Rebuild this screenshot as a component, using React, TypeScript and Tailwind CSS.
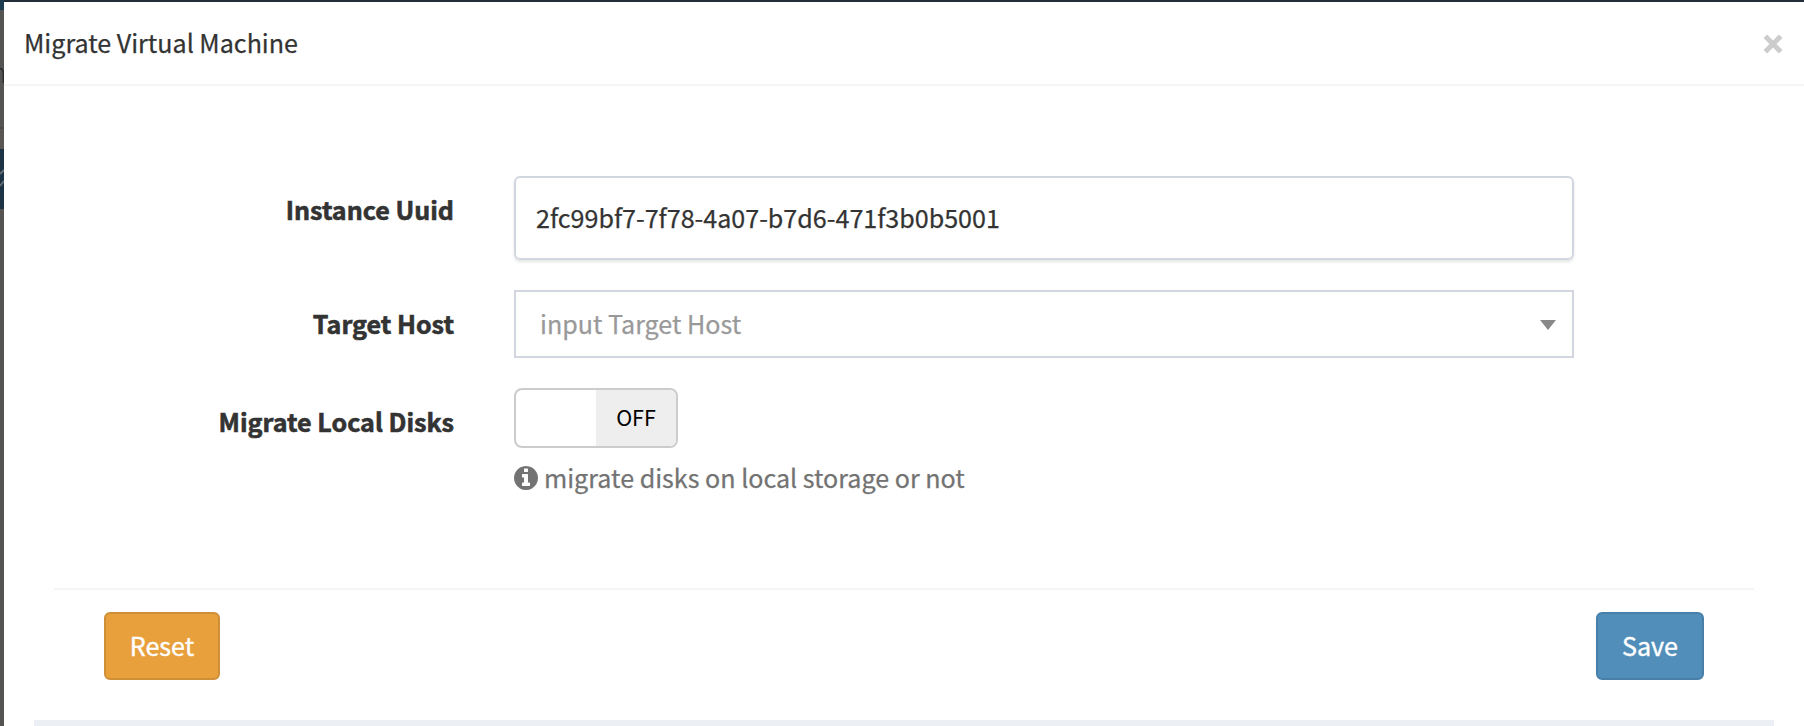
import React from "react";

const sans = "font-['Noto_Sans_CJK_SC','Noto_Sans',sans-serif]";

function InfoIcon() {
  return (
    <svg viewBox="128 128 1536 1536" className="mt-[2px] size-6 shrink-0" fill="currentColor" aria-hidden="true">
      <path d="M1152 1376v-160q0-14-9-23t-23-9h-96v-512q0-14-9-23t-23-9h-320q-14 0-23 9t-9 23v160q0 14 9 23t23 9h96v320h-96q-14 0-23 9t-9 23v160q0 14 9 23t23 9h448q14 0 23-9t9-23zm-128-896v-160q0-14-9-23t-23-9h-192q-14 0-23 9t-9 23v160q0 14 9 23t23 9h192q14 0 23-9t9-23zm640 416q0 209-103 385.5t-279.5 279.5-385.5 103-385.5-103-279.5-279.5-103-385.5 103-385.5 279.5-279.5 385.5-103 385.5 103 279.5 279.5 103 385.5z" />
    </svg>
  );
}

function Label({ children }: { children: React.ReactNode }) {
  return (
    <div className="w-[450px] shrink-0 pt-[13px] text-right font-bold leading-10 [-webkit-text-stroke:0.6px_#333]">
      {children}
    </div>
  );
}

/* Sliver of the dimmed page that stays visible beside the dialog. */
function Backdrop() {
  return (
    <div className="flex w-1 shrink-0 flex-col overflow-hidden bg-[#565453]">
      <div className="h-[10px] bg-[#1d3c52]" />
      <div className="h-[117px] pt-[57px]">
        <svg viewBox="0 0 4 17" className="h-[17px] w-1" fill="none" stroke="#2c2b2b" strokeWidth="1.6" aria-hidden="true">
          <path d="M0 1.5Q3.4 2 3.4 6V16" />
        </svg>
      </div>
      <div className="h-[2px] bg-[#4d4b4c]" />
      <div className="h-5 bg-[#595653]" />
      <div className="h-[60px] bg-[#1b3344] pt-[20px]">
        <svg viewBox="0 0 4 18" className="h-[18px] w-1" fill="none" stroke="#626d75" strokeWidth="2" aria-hidden="true">
          <path d="M0 5L4 1M0 17L4 12" />
        </svg>
      </div>
    </div>
  );
}

export default function App() {
  return (
    <div
      className={`${sans} flex h-[726px] w-[1804px] overflow-hidden bg-white text-[25.08px] leading-10 text-[#333] [-webkit-text-stroke:0.25px]`}
    >
      <Backdrop />
      <div className="flex min-w-0 flex-1 flex-col border-t-2 border-[#222d3a]">
        <header className="flex h-[84px] items-center justify-between border-b-2 border-[#f4f4f4] pl-5 pr-[21px]">
          <h4 className="pb-[2px]">Migrate Virtual Machine</h4>
          <button aria-label="Close" className="mt-px text-[#ccc]">
            <svg viewBox="0 0 20 20" className="size-5" fill="none" stroke="currentColor" strokeWidth="5" aria-hidden="true">
              <path d="M2.3 2.3L17.7 17.7M17.7 2.3L2.3 17.7" />
            </svg>
          </button>
        </header>

        <main className="mt-[90px] flex flex-col">
          <div className="flex h-[84px] gap-[60px]">
            <Label>Instance Uuid</Label>
            <div className="flex w-[1060px] items-center rounded-md border-2 border-[#d2d6de] px-5 pb-[2px] shadow-[0_2px_3px_rgba(0,0,0,0.1)]">
              2fc99bf7-7f78-4a07-b7d6-471f3b0b5001
            </div>
          </div>
          <div className="mt-[30px] flex h-[68px] gap-[60px]">
            <Label>Target Host</Label>
            <div className="flex w-[1060px] items-center justify-between border-2 border-[#d2d6de] pl-6 pr-4 text-[#999]">
              <span className="pb-[2px]">input Target Host</span>
              <svg viewBox="0 0 16 10" className="mt-[2px] h-[10px] w-4" fill="#888" aria-hidden="true">
                <path d="M0 0H16L8 10Z" />
              </svg>
            </div>
          </div>
          <div className="mt-[30px] flex h-[112px] gap-[60px]">
            <Label>Migrate Local Disks</Label>
            <div>
              <div className="flex h-[60px] w-[164px] overflow-hidden rounded-lg border-2 border-[#ccc]">
                <div className="w-[80px]" />
                <div className="flex w-[80px] items-center justify-center bg-[#eee] pb-[2px] text-[21.5px] text-black [-webkit-text-stroke:0px]">
                  OFF
                </div>
              </div>
              <div className="mt-[9px] flex items-center gap-[6px] text-[#737373]">
                <InfoIcon />
                migrate disks on local storage or not
              </div>
            </div>
          </div>
        </main>

        <footer className="mx-[50px] mt-[88px] flex h-[132px] items-start justify-between border-t-2 border-[#f4f4f4] px-[50px] pt-[22px] text-white">
          <button className="h-[68px] w-[116px] rounded-md border-2 border-[#ce8f37] bg-[#e8a03c] pb-[2px] [-webkit-text-stroke:0.4px]">
            Reset
          </button>
          <button className="h-[68px] w-[108px] rounded-md border-2 border-[#4880a9] bg-[#518eba] pb-[2px] [-webkit-text-stroke:0.4px]">
            Save
          </button>
        </footer>
        <div className="mx-[30px] h-[6px] bg-[#ecf0f5]" />
      </div>
    </div>
  );
}
